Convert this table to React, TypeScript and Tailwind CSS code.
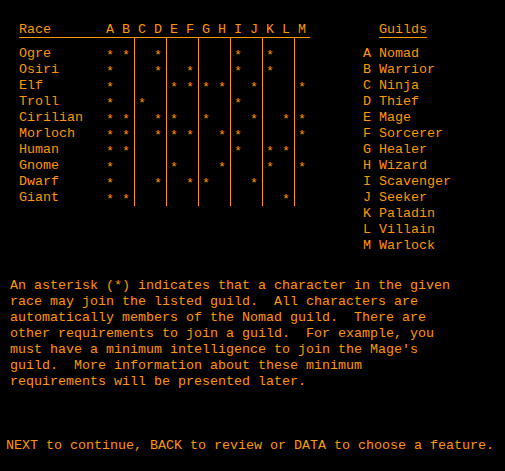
import React from "react";

const LETTERS = "ABCDEFGHIJKLM".split("");
const RACES: [string, string][] = [
  ["Ogre", "ABDIK"],
  ["Osiri", "ADFIK"],
  ["Elf", "AEFGHJM"],
  ["Troll", "ACI"],
  ["Cirilian", "ABDEGJLM"],
  ["Morloch", "ABDEFHIM"],
  ["Human", "ABIKL"],
  ["Gnome", "AEHKM"],
  ["Dwarf", "ADFGJ"],
  ["Giant", "ABL"],
];
const GUILDS = [
  "Nomad",
  "Warrior",
  "Ninja",
  "Thief",
  "Mage",
  "Sorcerer",
  "Healer",
  "Wizard",
  "Scavenger",
  "Seeker",
  "Paladin",
  "Villain",
  "Warlock",
];
const PARA = [
  "An asterisk (*) indicates that a character in the given",
  "race may join the listed guild.  All characters are",
  "automatically members of the Nomad guild.  There are",
  "other requirements to join a guild.  For example, you",
  "must have a minimum intelligence to join the Mage's",
  "guild.  More information about these minimum",
  "requirements will be presented later.",
];

export default function App() {
  return (
    <div className="w-[505px] h-[471px] bg-black overflow-hidden font-['Liberation_Mono',monospace] text-[13.333px] leading-[16px] text-[#ff9600] whitespace-pre">
      <div className="flex items-start pt-[22px]">
        {/* Race table */}
        <div className="ml-[19px] flex flex-col">
          <div className="flex h-[16px] w-[291px] border-b border-[#ff9600]">
            <span className="w-[83px]">Race</span>
            {LETTERS.map((l) => (
              <span key={l} className="w-[16px] text-center">
                {l}
              </span>
            ))}
          </div>
          <div className="flex">
            <div className="w-[83px] flex flex-col pt-[8px]">
              {RACES.map(([name]) => (
                <div key={name} className="h-[16px]">
                  {name}
                </div>
              ))}
            </div>
            {LETTERS.map((l, j) => (
              <div
                key={l}
                className={
                  "w-[16px] flex flex-col pt-[8px] " +
                  (j >= 2 && j % 2 === 0 ? "shadow-[inset_1px_0_0_#ff9600]" : "")
                }
              >
                {RACES.map(([name, g]) => (
                  <div key={name} className="h-[16px] text-center">
                    {g.includes(l) ? (
                      <span className="inline-block translate-y-[2px]">*</span>
                    ) : (
                      ""
                    )}
                  </div>
                ))}
              </div>
            ))}
          </div>
        </div>
        {/* Guild list */}
        <div className="ml-[53px] flex flex-col">
          <div className="pl-[16px] h-[16px]">
            <span className="inline-block w-[48px] h-[16px] border-b border-[#ff9600]">Guilds</span>
          </div>
          <div className="flex flex-col pt-[8px]">
            {GUILDS.map((g, i) => (
              <div key={g} className="flex h-[16px]">
                <span className="w-[16px]">{LETTERS[i]}</span>
                <span>{g}</span>
              </div>
            ))}
          </div>
        </div>
      </div>
      <div className="mt-[24px] pl-[10px] flex flex-col">
        {PARA.map((p) => (
          <div key={p} className="h-[16px]">
            {p}
          </div>
        ))}
      </div>
      <div className="mt-[48px] pl-[6px] h-[16px]">
        NEXT to continue, BACK to review or DATA to choose a feature.
      </div>
    </div>
  );
}
